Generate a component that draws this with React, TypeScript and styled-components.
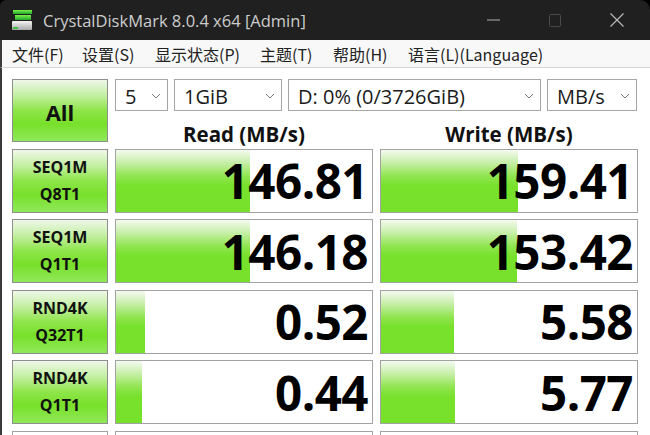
import React from "react";
import styled, { createGlobalStyle } from "styled-components";

const Global = createGlobalStyle`
  html, body { margin: 0; padding: 0; background: #000; }
  body { width: 650px; height: 435px; overflow: hidden; }
  #root { width: 650px; height: 435px; }
`;

const Window = styled.div`
  width: 650px;
  height: 435px;
  display: flex;
  flex-direction: column;
  overflow: hidden;
  font-family: "Open Sans", "Noto Sans", "Noto Sans CJK SC", sans-serif;
`;

const TitleBar = styled.div`
  height: 40px;
  flex: none;
  background: #202020;
  border-top-right-radius: 10px;
  border-top-left-radius: 6px;
  display: flex;
  align-items: center;
  padding-left: 11px;
  color: #cdcdcd;
`;

const AppTitle = styled.span`
  margin-left: 10px;
  font-size: 16.5px;
  flex: 1;
  margin-top: 1px;
`;

const Controls = styled.div`
  display: flex;
  align-items: center;
  height: 100%;
  gap: 16px;
  padding-right: 10px;
`;

const CtrlBtn = styled.div`
  width: 46px;
  height: 100%;
  display: flex;
  align-items: center;
  justify-content: center;
`;

const MenuBar = styled.div`
  height: 27px;
  flex: none;
  background: #f8f8f8;
  border-bottom: 1px solid #d6d6d6;
  display: flex;
  align-items: center;
  padding-left: 10px;
  font-family: "Noto Sans CJK SC", "Open Sans", sans-serif;
  font-size: 16px;
  color: #222;
  border-left: 2px solid #3a3a3a;
`;

const MenuItem = styled.span<{ $w: number }>`
  width: ${(p) => p.$w}px;
  white-space: nowrap;
`;

const Body = styled.div`
  flex: 1;
  background: #fff;
  border-left: 2px solid #3a3a3a;
  padding: 11px 0 0 10px;
  overflow: hidden;
`;

const Grid = styled.div`
  display: grid;
  grid-template-columns: 96px 258px 258px;
  grid-template-rows: 63px repeat(5, 64px);
  column-gap: 7px;
  row-gap: 6.5px;
`;

const GreenBox = styled.div`
  border: 1px solid #8e8e8e;
  background: linear-gradient(
    #eef7e9 0%,
    #c4efa2 25%,
    #8ee54a 50%,
    #78e02a 72%,
    #90e85a 100%
  );
  display: flex;
  flex-direction: column;
  align-items: center;
  justify-content: center;
  color: #111;
  font-weight: 700;
  box-sizing: border-box;
`;

const AllText = styled.span`
  font-size: 22px;
  margin-top: 3px;
`;

const LabelLine = styled.span`
  font-size: 16px;
  line-height: 27px;
`;

const TopArea = styled.div`
  grid-column: 2 / 4;
  display: flex;
  flex-direction: column;
`;

const ComboRow = styled.div`
  display: flex;
  gap: 6px;
  height: 32px;
  flex: none;
`;

const Combo = styled.div<{ $w: number }>`
  width: ${(p) => p.$w}px;
  box-sizing: border-box;
  border: 1px solid #a6a6a6;
  background: #fff;
  display: flex;
  align-items: center;
  padding: 2px 6px 0 9px;
  font-size: 20px;
  color: #1a1a1a;
`;

const ComboText = styled.span`
  flex: 1;
  white-space: nowrap;
`;

const HeaderRow = styled.div`
  display: grid;
  grid-template-columns: 258px 258px;
  column-gap: 7px;
  padding-top: 12px;
`;

const Header = styled.div`
  text-align: center;
  font-weight: 700;
  font-size: 20.5px;
  line-height: 22px;
  color: #111;
`;

const ValueBox = styled.div`
  position: relative;
  border: 1px solid #a2a2a2;
  background: #fff;
  box-sizing: border-box;
  overflow: hidden;
`;

const Bar = styled.div`
  position: absolute;
  left: 0;
  top: 0;
  bottom: 0;
  background: linear-gradient(
    #f4faf0 0%,
    #c8efaa 20%,
    #90e550 42%,
    #78e12c 58%,
    #76e02a 100%
  );
`;

const Value = styled.div`
  position: relative;
  height: 100%;
  display: flex;
  align-items: center;
  justify-content: flex-end;
  padding-right: 4px;
  font-size: 47.5px;
  font-weight: 700;
  letter-spacing: -0.5px;
  color: #000;
`;

const Empty = styled.div`
  border: 1px solid #a2a2a2;
  background: #fff;
`;

const AppIcon = () => (
  <svg width="22" height="22" viewBox="0 0 22 22">
    <defs>
      <linearGradient id="g1" x1="0" y1="0" x2="0" y2="1">
        <stop offset="0" stopColor="#7cf04a" />
        <stop offset="1" stopColor="#1fa82a" />
      </linearGradient>
      <linearGradient id="g2" x1="0" y1="0" x2="0" y2="1">
        <stop offset="0" stopColor="#f4f4f4" />
        <stop offset="1" stopColor="#a8a8a8" />
      </linearGradient>
    </defs>
    <rect x="2" y="1" width="19" height="4" fill="url(#g1)" />
    <rect x="4" y="6" width="16" height="5" fill="url(#g1)" />
    <rect x="1" y="12" width="20" height="9" rx="1" fill="url(#g2)" />
    <rect x="2" y="18" width="5" height="2" fill="#3cc040" />
  </svg>
);

const rows = [
  { a: "SEQ1M", b: "Q8T1", r: "146.81", rw: 134, w: "159.41", ww: 137 },
  { a: "SEQ1M", b: "Q1T1", r: "146.18", rw: 134, w: "153.42", ww: 136 },
  { a: "RND4K", b: "Q32T1", r: "0.52", rw: 29, w: "5.58", ww: 73 },
  { a: "RND4K", b: "Q1T1", r: "0.44", rw: 26, w: "5.77", ww: 74 },
];

const Chevron = () => (
  <svg width="10" height="6" viewBox="0 0 10 6">
    <path d="M1 1 L5 5 L9 1" fill="none" stroke="#777" strokeWidth="1" />
  </svg>
);

export default function App() {
  return (
    <>
      <Global />
      <Window>
        <TitleBar>
          <AppIcon />
          <AppTitle>CrystalDiskMark 8.0.4 x64 [Admin]</AppTitle>
          <Controls>
            <CtrlBtn>
              <svg width="13" height="2" viewBox="0 0 13 2">
                <rect x="0" y="0.5" width="13" height="1" fill="#b0b0b0" />
              </svg>
            </CtrlBtn>
            <CtrlBtn>
              <svg width="12" height="13" viewBox="0 0 12 13">
                <rect x="0.5" y="0.5" width="11" height="12" rx="1" fill="none" stroke="#4a4a4a" />
              </svg>
            </CtrlBtn>
            <CtrlBtn>
              <svg width="14" height="14" viewBox="0 0 14 14">
                <path d="M0.5 0.5 L13.5 13.5 M13.5 0.5 L0.5 13.5" stroke="#bdbdbd" strokeWidth="1.1" />
              </svg>
            </CtrlBtn>
          </Controls>
        </TitleBar>
        <MenuBar>
          <MenuItem $w={70}>文件(F)</MenuItem>
          <MenuItem $w={73}>设置(S)</MenuItem>
          <MenuItem $w={105}>显示状态(P)</MenuItem>
          <MenuItem $w={73}>主题(T)</MenuItem>
          <MenuItem $w={75}>帮助(H)</MenuItem>
          <MenuItem $w={160}>语言(L)(Language)</MenuItem>
        </MenuBar>
        <Body>
          <Grid>
            <GreenBox>
              <AllText>All</AllText>
            </GreenBox>
            <TopArea>
              <ComboRow>
                <Combo $w={53}>
                  <ComboText>5</ComboText>
                  <Chevron />
                </Combo>
                <Combo $w={108}>
                  <ComboText>1GiB</ComboText>
                  <Chevron />
                </Combo>
                <Combo $w={253}>
                  <ComboText>D: 0% (0/3726GiB)</ComboText>
                  <Chevron />
                </Combo>
                <Combo $w={90}>
                  <ComboText>MB/s</ComboText>
                  <Chevron />
                </Combo>
              </ComboRow>
              <HeaderRow>
                <Header>Read (MB/s)</Header>
                <Header>Write (MB/s)</Header>
              </HeaderRow>
            </TopArea>
            {rows.map((r, i) => (
              <React.Fragment key={i}>
                <GreenBox>
                  <LabelLine>{r.a}</LabelLine>
                  <LabelLine>{r.b}</LabelLine>
                </GreenBox>
                <ValueBox>
                  <Bar style={{ width: r.rw }} />
                  <Value>{r.r}</Value>
                </ValueBox>
                <ValueBox>
                  <Bar style={{ width: r.ww }} />
                  <Value>{r.w}</Value>
                </ValueBox>
              </React.Fragment>
            ))}
            <Empty />
            <Empty />
            <Empty />
          </Grid>
        </Body>
      </Window>
    </>
  );
}
